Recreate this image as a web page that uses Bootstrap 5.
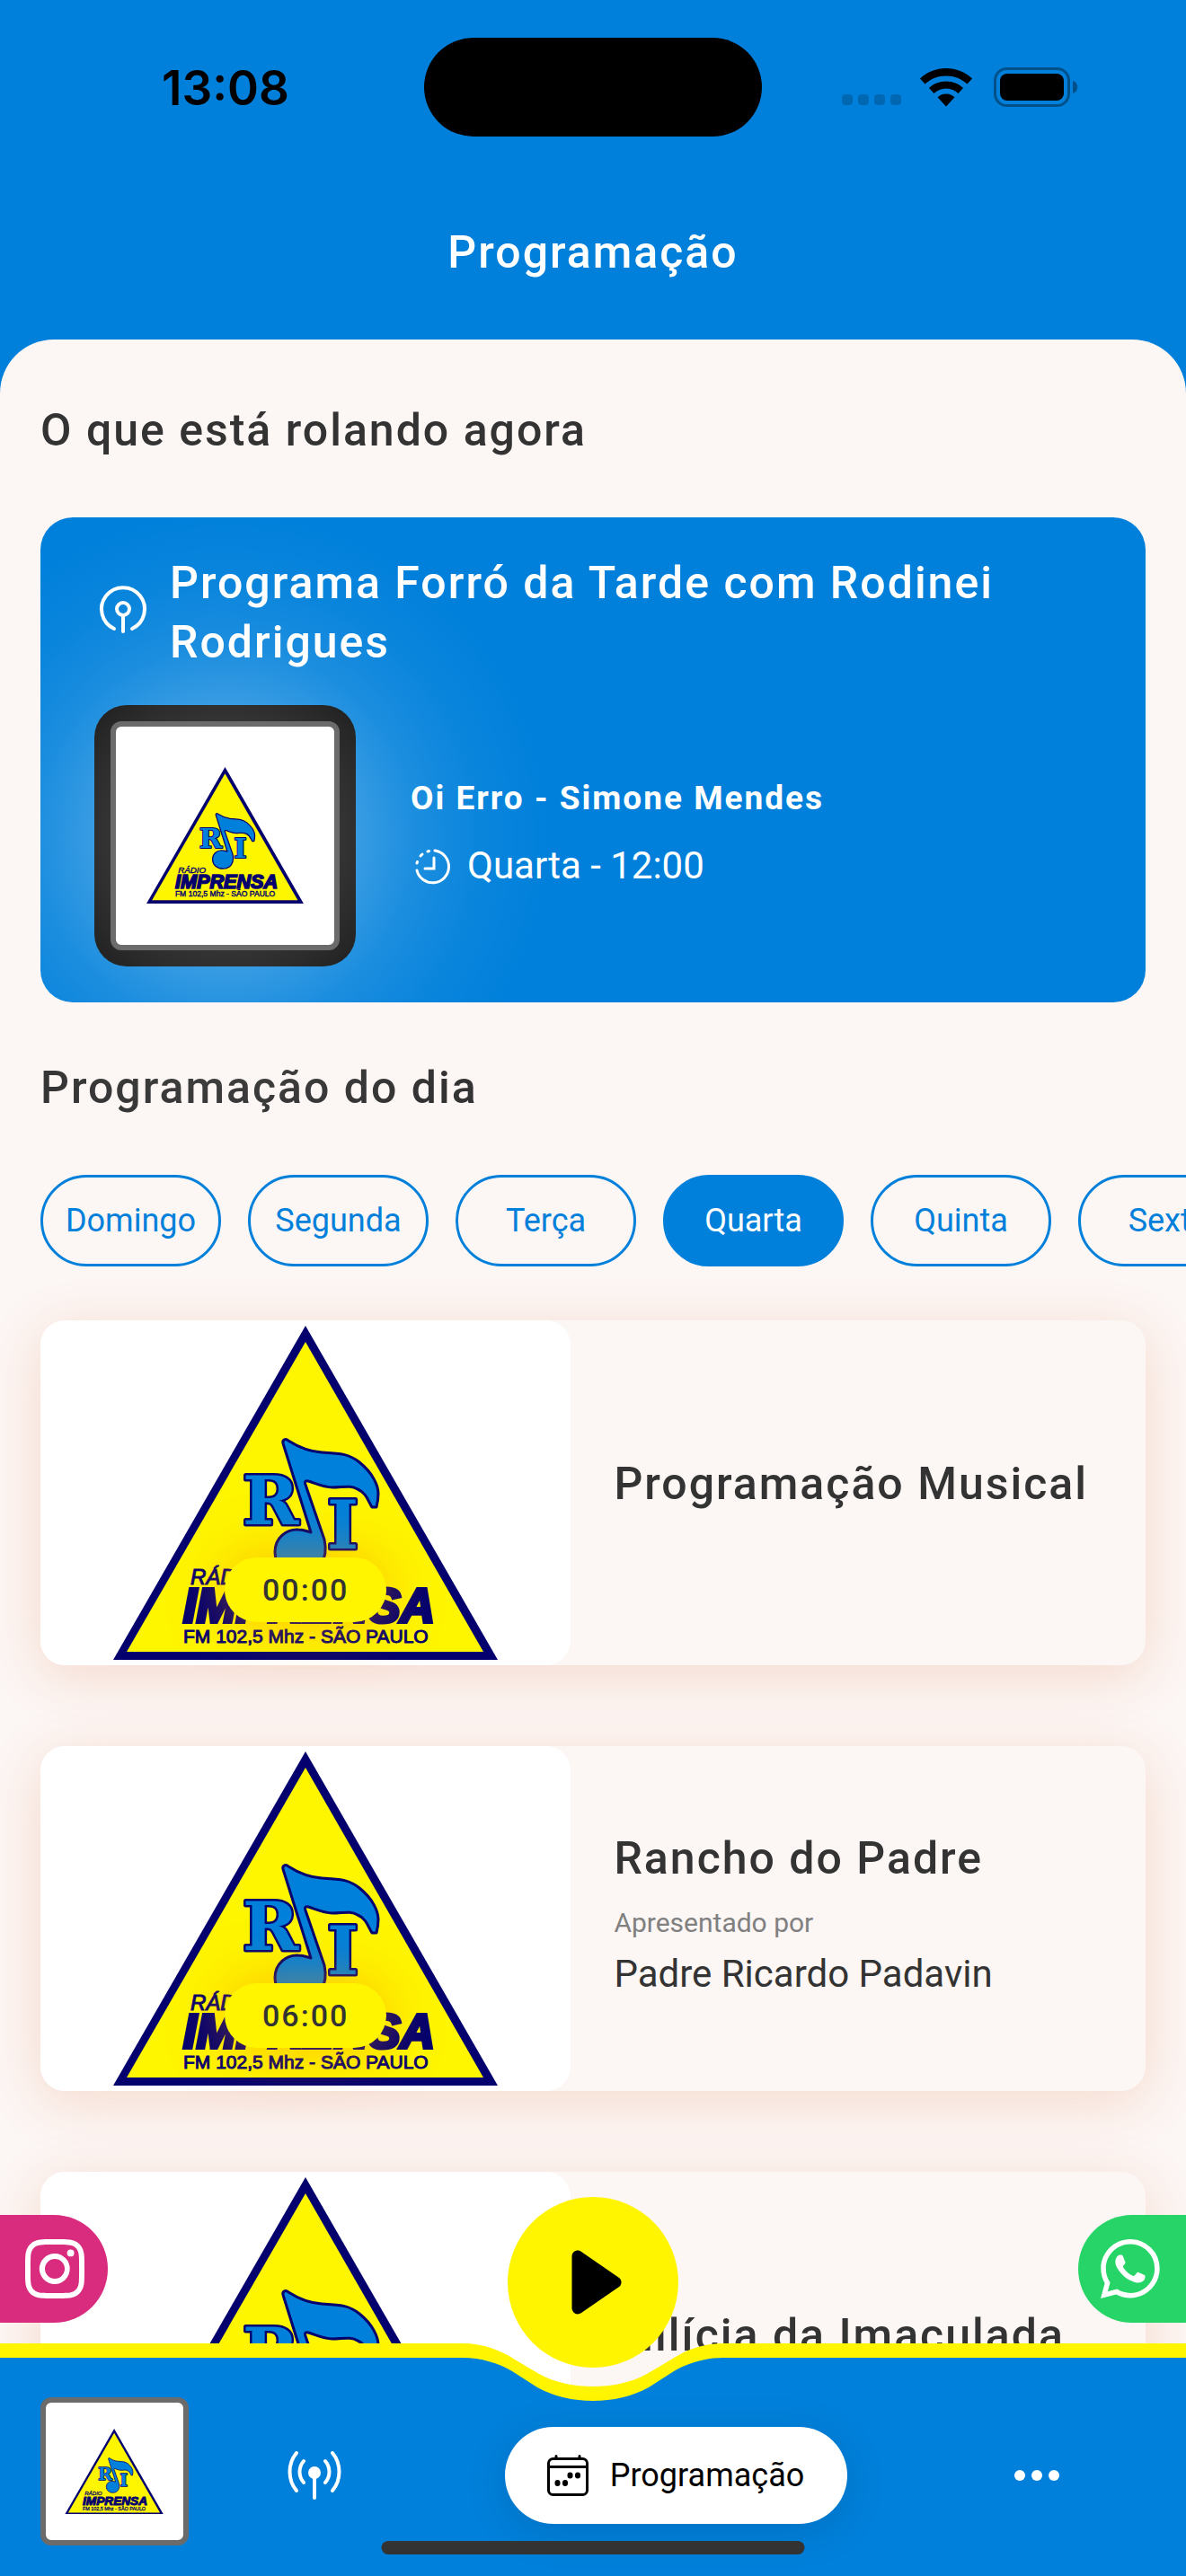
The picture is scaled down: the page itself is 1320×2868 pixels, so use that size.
<!DOCTYPE html>
<html lang="pt-BR">
<head>
<meta charset="utf-8">
<meta name="viewport" content="width=device-width, initial-scale=1">
<title>Programação</title>
<link href="https://cdn.jsdelivr.net/npm/bootstrap@5.3.0/dist/css/bootstrap.min.css" rel="stylesheet">
<style>
  :root { --blue: #0080db; --yellow: #fff500; --paper: #fcf6f4; --ink: #333333; }
  body { font-family: Roboto, "Liberation Sans", sans-serif; background: var(--blue); color: var(--ink); font-size: 36px; line-height: 48px; }
  a { color: inherit; text-decoration: none; }
  svg { display: block; flex: none; }
  .heading { font-size: 50px; line-height: 66px; font-weight: 500; letter-spacing: 2px; margin: 0; }

  .status { height: 192px; padding: 42px 120px 0; }
  .status .side { flex: 1 1 0; height: 110px; }
  .clock { font: 600 53px/60px Inter, sans-serif; color: #000; padding: 2px 0 0 60px; }
  .island { width: 376px; height: 110px; border-radius: 55px; background: #000; }
  .signal i { width: 12px; height: 12px; border-radius: 4px; background: #0068b2; }
  .signal { gap: 6px; padding: 28px 21px 0 0; }

  .titlebar { height: 186px; padding-top: 56px; color: #fff; }
  .sheet { background: var(--paper); border-radius: 60px 60px 0 0; padding: 68px 45px 0; overflow: hidden; }

  .now { background: var(--blue); color: #fff; border-radius: 36px; margin-top: 64px; padding: 40px 60px; }
  .live { gap: 24px; padding-left: 6px; }
  .playing { margin-top: 37px; gap: 61px; }
  .glow { position: relative; }
  .glow::before { content: ""; position: absolute; inset: -220px; pointer-events: none;
    background: radial-gradient(closest-side, rgba(255,255,255,.28), rgba(255,255,255,.22) 40%, rgba(255,255,255,.11) 58%, rgba(255,255,255,.04) 78%, rgba(255,255,255,0)); }
  .frame { position: relative; width: 291px; height: 291px; padding: 18px; border-radius: 36px; background: radial-gradient(circle, #444 30%, #3a3a3a 50%, #202020 100%); }
  .art { border: 6px solid #6b6b6b; border-radius: 12px; background: #fff; }
  .art svg { width: 72%; height: auto; }
  .track { font-size: 37px; line-height: 48px; font-weight: 700; letter-spacing: 2px; }
  .when { font-size: 42px; line-height: 54px; gap: 15px; margin: 24px 0 6px; }

  .day-title { margin-top: 62px; }
  .days { gap: 30px; margin: 64px -45px 0 0; overflow-x: auto; scrollbar-width: none; }
  .days::-webkit-scrollbar { display: none; }
  .day { flex: 0 0 201px; height: 102px; border: 3px solid var(--blue); border-radius: 51px; color: var(--blue); background: transparent; font-size: 36px; line-height: 48px; padding: 0; }
  .day.active { background: var(--blue); color: #fff; }

  .programs { gap: 90px; margin-top: 60px; }
  .program { min-height: 384px; border-radius: 27px; background: var(--paper); box-shadow: 0 12px 60px rgba(215,90,30,.18); }
  .cover { position: relative; flex: 0 0 48%; background: #fff; border-radius: 27px; }
  .cover svg { width: 428px; height: auto; }
  .hour { position: absolute; bottom: 48px; left: 50%; transform: translateX(-50%); width: 180px; line-height: 72px; border-radius: 36px; background: var(--yellow); font-size: 34px; font-weight: 500; letter-spacing: 2px; box-shadow: 0 0 60px rgba(255,140,0,.5); }
  .info { padding: 0 48px; }
  .info .heading { margin-bottom: 21px; }
  .by { font-size: 30px; line-height: 36px; color: #808080; margin-bottom: 12px; }
  .host { font-size: 42px; line-height: 54px; margin-bottom: 12px; }

  .dock { z-index: 10; }
  .social { width: 120px; height: 120px; color: #fff; }
  .insta { background: #d92c7f; border-radius: 0 60px 60px 0; padding-left: 28px; }
  .whats { background: #26d467; border-radius: 60px 0 0 60px; padding-left: 25px; }
  .play { width: 190px; height: 190px; border: 0; border-radius: 50%; background: var(--yellow); padding: 0; margin-bottom: -27px; position: relative; z-index: 2; }
  .socials { padding-bottom: 23px; }
  .edge { height: 64px; border-top: 16px solid var(--yellow); background: var(--blue); }
  .tabs { background: var(--blue); height: 195px; padding: 0 136px 0 45px; }
  .tabs .art { width: 165px; height: 165px; margin: -4px 110px 0 0; position: relative; }
  .menu { margin-top: 29px; height: 108px; }
  .tab { min-width: 60px; height: 108px; color: #fff; }
  .tab.current { width: 381px; border-radius: 54px; background: #fff; color: #000; gap: 24px; box-shadow: 0 9px 48px rgba(0,0,0,.12); }
  .home { position: absolute; bottom: 24px; left: 50%; transform: translateX(-50%); width: 471px; height: 15px; border-radius: 8px; background: #333; }
</style>
</head>
<body>

<svg class="d-none" aria-hidden="true">
  <symbol id="logo" viewBox="0 0 428 372">
    <path d="M214 0 428 372H0Z" fill="#04006e"/>
    <path d="M214 18 412 363H15Z" fill="#fef500"/>
    <g fill="#0080db" stroke="#04006e" stroke-width="3" stroke-linejoin="round">
      <g font-family="DejaVu Serif, serif" font-weight="700" font-size="75" stroke-width="5" paint-order="stroke">
        <text x="144" y="221">R</text>
        <text x="238" y="248">I</text>
      </g>
      <path d="M189 131C188 127 192 125 195 128C206 135 217 140 232 141C250 142 262 142 274 152C289 164 295 178 295 187C295 193 294 198 293 202L288 202C284 196 282 186 272 182C264 177 256 180 244 180C234 180 224 175 217 173C213 172 213 175 214 177L235 238C240 261 228 277 208 277C192 277 180 266 180 252C180 236 193 226 206 227C212 227 216 229 220 230Z"/>
    </g>
    <g fill="#04006e" font-family="Liberation Sans, sans-serif">
      <text x="86" y="288" font-size="24" font-style="italic" stroke="#04006e" stroke-width="1">RÁDIO</text>
      <text x="78" y="330" font-size="53" font-weight="700" font-style="italic" stroke="#04006e" stroke-width="4">IMPRENSA</text>
      <text x="78" y="353" font-size="21" stroke="#04006e" stroke-width="1">FM 102,5 Mhz - SÃO PAULO</text>
    </g>
  </symbol>
</svg>

<header>
  <div class="status d-flex">
    <div class="side d-flex align-items-center"><span class="clock">13:08</span></div>
    <div class="island"></div>
    <div class="side d-flex align-items-center justify-content-end">
      <div class="signal d-flex"><i></i><i></i><i></i><i></i></div>
      <svg width="58" height="43" viewBox="0 0 58 43" fill="#000"><path d="M29 0C18 0 8 4 0 11.500L5.500 17.500C12 11.700 20 8.500 29 8.500S46 11.700 52.500 17.500L58 11.500C50 4 40 0 29 0ZM29 14.500C21.500 14.500 15 17.300 10 22L15.500 28C19 24.600 23.700 22.500 29 22.500S39 24.600 42.500 28L48 22C43 17.300 36.500 14.500 29 14.500ZM29 28.500C25 28.500 22 30 19.500 32.300L29 42.500 38.500 32.300C36 30 33 28.500 29 28.500Z"/></svg>
      <svg width="94" height="44" viewBox="0 0 94 44" class="ms-4"><rect x="1.500" y="1.500" width="82" height="41" rx="13" fill="none" stroke="#00508a" stroke-width="3"/><rect x="7" y="7" width="71" height="30" rx="8"/><path d="M88 15C95 17 95 27 88 29Z" fill="#00508a"/></svg>
    </div>
  </div>
  <div class="titlebar text-center"><h1 class="heading">Programação</h1></div>
</header>

<main class="sheet">
  <h2 class="heading">O que está rolando agora</h2>

  <section class="now">
    <div class="live d-flex align-items-center">
      <svg width="54" height="56" viewBox="1 4 54 56" fill="none" stroke="#fff" stroke-width="4" stroke-linecap="round" overflow="visible"><path d="M17 50A24 24 0 1 1 37 50"/><circle cx="27" cy="28" r="7"/><path d="M27 35V53"/></svg>
      <h3 class="heading">Programa Forró da Tarde com Rodinei Rodrigues</h3>
    </div>
    <div class="playing d-flex align-items-center">
      <div class="glow"><div class="frame"><div class="art d-flex align-items-center justify-content-center w-100 h-100"><svg viewBox="0 0 428 372"><use href="#logo"/></svg></div></div></div>
      <div>
        <div class="track">Oi Erro - Simone Mendes</div>
        <div class="when d-flex align-items-center">
          <svg width="48" height="48" viewBox="0 0 48 48" fill="none" stroke="#fff" stroke-width="3" stroke-linecap="round"><path d="M27 7A18 18 0 1 1 7 29"/><path d="M19 8 20.500 7.500M11 13 13 11M7 21 7.500 19.500"/><path d="M26 15V27H16"/></svg>
          <span>Quarta - 12:00</span>
        </div>
      </div>
    </div>
  </section>

  <h2 class="heading day-title">Programação do dia</h2>

  <div class="days d-flex">
    <button type="button" class="day">Domingo</button>
    <button type="button" class="day">Segunda</button>
    <button type="button" class="day">Terça</button>
    <button type="button" class="day active" aria-pressed="true">Quarta</button>
    <button type="button" class="day">Quinta</button>
    <button type="button" class="day">Sexta</button>
  </div>

  <section class="programs d-flex flex-column">
    <article class="program d-flex">
      <div class="cover d-flex align-items-center justify-content-center"><svg viewBox="0 0 428 372"><use href="#logo"/></svg><time class="hour text-center">00:00</time></div>
      <div class="info d-flex flex-column justify-content-center"><h3 class="heading">Programação Musical</h3></div>
    </article>
    <article class="program d-flex">
      <div class="cover d-flex align-items-center justify-content-center"><svg viewBox="0 0 428 372"><use href="#logo"/></svg><time class="hour text-center">06:00</time></div>
      <div class="info d-flex flex-column justify-content-center"><h3 class="heading">Rancho do Padre</h3><div class="by">Apresentado por</div><div class="host">Padre Ricardo Padavin</div></div>
    </article>
    <article class="program d-flex">
      <div class="cover d-flex align-items-center justify-content-center"><svg viewBox="0 0 428 372"><use href="#logo"/></svg></div>
      <div class="info d-flex flex-column justify-content-center"><h3 class="heading">Milícia da Imaculada</h3></div>
    </article>
  </section>
</main>

<div class="dock fixed-bottom">
  <div class="d-flex justify-content-between align-items-end">
    <div class="socials"><a href="#" class="social insta d-flex align-items-center" aria-label="Instagram"><svg width="66" height="66" viewBox="0 0 16 16" fill="currentColor"><path d="M8 0C5.829 0 5.556.01 4.703.048 3.850.088 3.269.222 2.760.420a3.900 3.900 0 0 0-1.417.923A3.900 3.900 0 0 0 .420 2.760C.222 3.268.087 3.850.048 4.700.010 5.555 0 5.827 0 8.001c0 2.172.010 2.444.048 3.297.040.852.174 1.433.372 1.942.205.526.478.972.923 1.417.444.445.890.719 1.416.923.510.198 1.090.333 1.942.372C5.555 15.990 5.827 16 8 16s2.444-.010 3.298-.048c.851-.040 1.434-.174 1.943-.372a3.900 3.900 0 0 0 1.416-.923c.445-.445.718-.891.923-1.417.197-.509.332-1.090.372-1.942C15.990 10.445 16 10.173 16 8s-.010-2.445-.048-3.299c-.040-.851-.175-1.433-.372-1.941a3.900 3.900 0 0 0-.923-1.417A3.900 3.900 0 0 0 13.240.420c-.510-.198-1.092-.333-1.943-.372C10.443.010 10.172 0 7.998 0zm-.717 1.442h.718c2.136 0 2.389.007 3.232.046.780.035 1.204.166 1.486.275.373.145.640.319.920.599s.453.546.598.920c.110.281.240.705.275 1.485.039.843.047 1.096.047 3.231s-.008 2.389-.047 3.232c-.035.780-.166 1.203-.275 1.485a2.500 2.500 0 0 1-.599.919c-.280.280-.546.453-.920.598-.280.110-.704.240-1.485.276-.843.038-1.096.047-3.232.047s-2.390-.009-3.233-.047c-.780-.036-1.203-.166-1.485-.276a2.500 2.500 0 0 1-.920-.598 2.500 2.500 0 0 1-.600-.920c-.109-.281-.240-.705-.275-1.485-.038-.843-.046-1.096-.046-3.233s.008-2.388.046-3.231c.036-.780.166-1.204.276-1.486.145-.373.319-.640.599-.920s.546-.453.920-.598c.282-.110.705-.240 1.485-.276.738-.034 1.024-.044 2.515-.045zm4.988 1.328a.960.960 0 1 0 0 1.920.960.960 0 0 0 0-1.920m-4.270 1.122a4.109 4.109 0 1 0 0 8.217 4.109 4.109 0 0 0 0-8.217m0 1.441a2.667 2.667 0 1 1 0 5.334 2.667 2.667 0 0 1 0-5.334"/></svg></a></div>
    <button type="button" class="play" aria-label="Tocar"><svg width="190" height="190" viewBox="0 0 190 190"><path d="M78 66V124L120 95Z" stroke="#000" stroke-width="13" stroke-linejoin="round"/></svg></button>
    <div class="socials"><a href="#" class="social whats d-flex align-items-center" aria-label="WhatsApp"><svg width="66" height="66" viewBox="0 0 16 16" fill="currentColor"><path d="M13.601 2.326A7.850 7.850 0 0 0 7.994 0C3.627 0 .068 3.558.064 7.926c0 1.399.366 2.760 1.057 3.965L0 16l4.204-1.102a7.900 7.900 0 0 0 3.790.965h.004c4.368 0 7.926-3.558 7.930-7.930A7.900 7.900 0 0 0 13.600 2.326zM7.994 14.521a6.600 6.600 0 0 1-3.356-.920l-.240-.144-2.494.654.666-2.433-.156-.251a6.560 6.560 0 0 1-1.007-3.505c0-3.626 2.957-6.584 6.591-6.584a6.560 6.560 0 0 1 4.660 1.931 6.560 6.560 0 0 1 1.928 4.660c-.004 3.639-2.961 6.592-6.592 6.592m3.615-4.934c-.197-.099-1.170-.578-1.353-.646-.182-.065-.315-.099-.445.099-.133.197-.513.646-.627.775-.114.133-.232.148-.430.050-.197-.100-.836-.308-1.592-.985-.590-.525-.985-1.175-1.103-1.372-.114-.198-.011-.304.088-.403.087-.088.197-.232.296-.346.100-.114.133-.198.198-.330.065-.134.034-.248-.015-.347-.050-.099-.445-1.076-.612-1.470-.160-.389-.323-.335-.445-.340-.114-.007-.247-.007-.380-.007a.730.730 0 0 0-.529.247c-.182.198-.691.677-.691 1.654s.710 1.916.810 2.049c.098.133 1.394 2.132 3.383 2.992.470.205.840.326 1.129.418.475.152.904.129 1.246.080.380-.058 1.171-.480 1.338-.943.164-.464.164-.860.114-.943-.049-.084-.182-.133-.380-.232"/></svg></a></div>
  </div>
  <div class="d-flex">
    <div class="edge flex-fill"></div>
    <svg width="300" height="64" viewBox="0 0 300 64">
      <path fill="#fff500" d="M0 0H5C28 0 48 8 63 18L90 34C108 44 130 48 150 48S192 44 210 34L237 18C252 8 272 0 295 0H300V64H0Z"/>
      <path fill="#0080db" d="M0 16H5C25 16 45 22 60 31L88 49C106 59 128 64 150 64S194 59 212 49L240 31C255 22 275 16 295 16H300V64H0Z"/>
    </svg>
    <div class="edge flex-fill"></div>
  </div>
  <nav class="tabs d-flex align-items-start">
    <div class="art d-flex flex-shrink-0 align-items-center justify-content-center"><svg viewBox="0 0 428 372"><use href="#logo"/></svg></div>
    <div class="menu d-flex flex-fill justify-content-between">
      <a href="#" class="tab d-flex align-items-center justify-content-center" aria-label="Ao vivo"><svg width="60" height="54" viewBox="0 0 60 54" fill="none" stroke="#fff" stroke-width="4" stroke-linecap="round"><path d="M10 2C0 14 0 32 10 44M18 11C12 18 12 28 18 35M50 2C60 14 60 32 50 44M42 11C48 18 48 28 42 35"/><circle cx="30" cy="24" r="7" fill="#fff" stroke="none"/><path d="M30 24V52"/></svg></a>
      <a href="#" class="tab current d-flex align-items-center justify-content-center" aria-current="page"><svg width="46" height="46" viewBox="0 0 46 46" fill="none" stroke="#000" stroke-width="3" stroke-linecap="round"><rect x="1.500" y="4.500" width="43" height="40" rx="5"/><path d="M2 13.500H44M10 1.500V4M36 1.500V4"/><path d="M25.500 22.500V23.500M34 22.500V23.500M11.500 31V32M20 31V32" stroke-width="6"/></svg><span>Programação</span></a>
      <a href="#" class="tab d-flex align-items-center justify-content-center" aria-label="Mais"><svg width="50" height="12" viewBox="0 0 50 12" fill="#fff"><circle cx="6" cy="6" r="6"/><circle cx="25" cy="6" r="6"/><circle cx="44" cy="6" r="6"/></svg></a>
    </div>
  </nav>
  <div class="home"></div>
</div>

<script src="https://cdn.jsdelivr.net/npm/bootstrap@5.3.0/dist/js/bootstrap.bundle.min.js"></script>
</body>
</html>
